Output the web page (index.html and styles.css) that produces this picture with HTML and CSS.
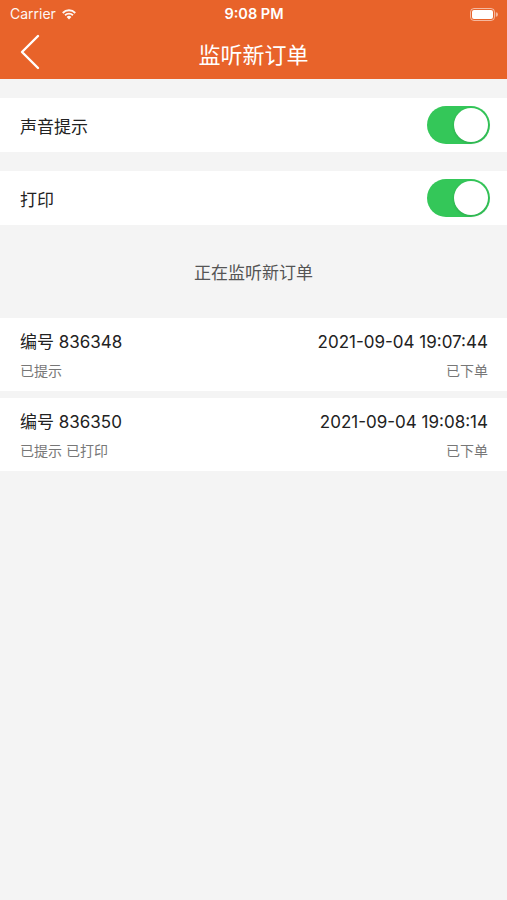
FILE: index.html
```html
<!DOCTYPE html>
<html>
<head>
	<meta charset="UTF-8">
	<title>监听新订单</title>
	<link rel="stylesheet" href="styles.css">
</head>
<body>
	<div class="header">
		<div class="status-bar">
			<div class="status-left">
				<span>Carrier</span>
				<svg class="wifi" width="16" height="12" viewBox="0 0 16 12">
					<path d="M8 11.5 L5.6 8.9 A3.4 3.4 0 0 1 10.4 8.9 Z" fill="#fff"/>
					<path d="M3.4 6.6 A6.4 6.4 0 0 1 12.6 6.6 L11.3 8 A4.6 4.6 0 0 0 4.7 8 Z" fill="#fff"/>
					<path d="M1.1 4.3 A9.6 9.6 0 0 1 14.9 4.3 L13.6 5.7 A7.8 7.8 0 0 0 2.4 5.7 Z" fill="#fff"/>
				</svg>
			</div>
			<div class="status-time">9:08 PM</div>
			<div class="status-right">
				<svg width="28" height="13" viewBox="0 0 28 13">
					<rect x="0.5" y="0.5" width="24" height="12" rx="3.5" fill="none" stroke="rgba(255,255,255,0.55)"/>
					<rect x="2" y="2" width="21" height="9" rx="2" fill="#fff"/>
					<path d="M25.8 4.3 A2.2 2.2 0 0 1 25.8 8.7 Z" fill="rgba(255,255,255,0.55)"/>
				</svg>
			</div>
		</div>
		<div class="nav-bar">
			<svg class="back" width="22" height="36" viewBox="0 0 22 36">
				<path d="M19 2 L3 18 L19 34" fill="none" stroke="#fff" stroke-width="2.4" stroke-linecap="round" stroke-linejoin="round"/>
			</svg>
			<div class="nav-title">监听新订单</div>
		</div>
	</div>

	<div class="setting-row">
		<span>声音提示</span>
		<div class="switch"><div class="knob"></div></div>
	</div>
	<div class="setting-row">
		<span>打印</span>
		<div class="switch"><div class="knob"></div></div>
	</div>

	<div class="listening">正在监听新订单</div>

	<div class="order">
		<div class="order-line">
			<span class="order-no">编号 836348</span>
			<span class="order-time">2021-09-04 19:07:44</span>
		</div>
		<div class="order-line sub">
			<span>已提示</span>
			<span>已下单</span>
		</div>
	</div>
	<div class="order">
		<div class="order-line">
			<span class="order-no">编号 836350</span>
			<span class="order-time">2021-09-04 19:08:14</span>
		</div>
		<div class="order-line sub">
			<span>已提示 已打印</span>
			<span>已下单</span>
		</div>
	</div>
</body>
</html>
```

FILE: styles.css
```css
body {
	margin: 0;
	background: #f4f4f4;
	font-family: "Inter", "Noto Sans CJK SC", sans-serif;
	color: #222;
}
.header {
	background: #e8632a;
	height: 79px;
	color: #fff;
}
.status-bar {
	height: 27px;
	display: flex;
	align-items: center;
	justify-content: space-between;
	padding: 0 9px 0 10px;
	font-size: 14px;
}
.status-left {
	display: flex;
	align-items: center;
	gap: 5px;
	width: 120px;
	opacity: 0.95;
}
.status-time {
	font-weight: 600;
	font-size: 14.5px;
}
.status-right {
	width: 120px;
	display: flex;
	justify-content: flex-end;
	padding-top: 1px;
}
.nav-bar {
	height: 52px;
	display: flex;
	align-items: center;
	justify-content: center;
	position: relative;
}
.back {
	position: absolute;
	left: 19px;
	top: 7px;
}
.nav-title {
	font-size: 22px;
	margin-top: -1px;
}
.setting-row {
	background: #fff;
	height: 54px;
	margin-top: 19px;
	display: flex;
	align-items: center;
	justify-content: space-between;
	padding: 0 17px 0 20px;
	font-size: 17px;
}
.switch {
	width: 63px;
	height: 38px;
	border-radius: 19px;
	background: #34c759;
	position: relative;
}
.knob {
	position: absolute;
	right: 2px;
	top: 2px;
	width: 34px;
	height: 34px;
	border-radius: 50%;
	background: #fff;
	box-shadow: 0 1px 3px rgba(0,0,0,0.15);
}
.listening {
	height: 93px;
	display: flex;
	align-items: center;
	justify-content: center;
	font-size: 17px;
	color: #555;
}
.order {
	background: #fff;
	height: 73px;
	margin-bottom: 7px;
	padding: 0 19px 2px 20px;
	box-sizing: border-box;
	display: flex;
	flex-direction: column;
	justify-content: center;
	gap: 7px;
}
.order-line {
	display: flex;
	justify-content: space-between;
	align-items: baseline;
}
.order-no, .order-time {
	font-size: 17px;
	color: #222;
}
.order-line.sub {
	font-size: 14px;
	color: #777;
}
```
